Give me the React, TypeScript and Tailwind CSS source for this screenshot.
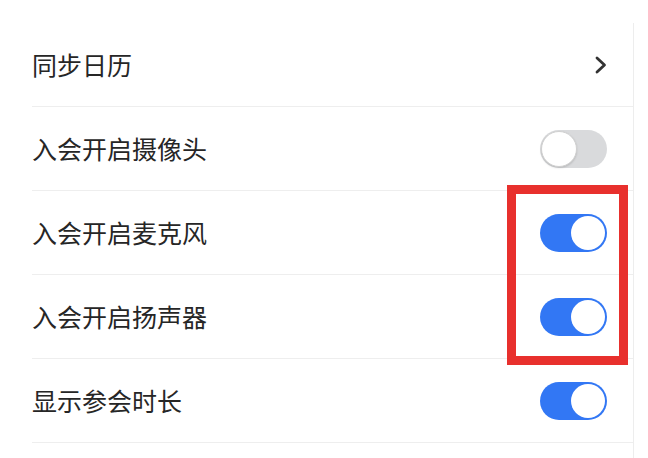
import React from "react";

function Toggle({ on }: { on: boolean }) {
  if (on) {
    return (
      <div className="flex h-[38px] w-[67px] items-center justify-end rounded-full bg-[#3277f4] pr-[2px]">
        <div className="h-[34px] w-[34px] rounded-full bg-white" />
      </div>
    );
  }
  return (
    <div className="flex h-[38px] w-[67px] items-center justify-start rounded-full bg-[#d9dadc] pl-[1px]">
      <div className="h-[36px] w-[36px] rounded-full border border-[#d0d0d0] bg-white shadow-[0_1px_2px_rgba(0,0,0,0.15)]" />
    </div>
  );
}

function Chevron() {
  return (
    <svg width="14" height="18" viewBox="0 0 14 18" className="mr-[-1px]">
      <path d="M3 2 L10.5 9 L3 16" fill="none" stroke="#333" strokeWidth="2.8" strokeLinecap="round" strokeLinejoin="round" />
    </svg>
  );
}

const rows: { label: string; right: "chevron" | "on" | "off" }[] = [
  { label: "同步日历", right: "chevron" },
  { label: "入会开启摄像头", right: "off" },
  { label: "入会开启麦克风", right: "on" },
  { label: "入会开启扬声器", right: "on" },
  { label: "显示参会时长", right: "on" },
];

export default function App() {
  return (
    <div
      className="h-[458px] w-[648px] overflow-hidden bg-white pt-[23px]"
      style={{ fontFamily: '"Noto Sans CJK SC", "Noto Sans", sans-serif' }}
    >
      <div className="relative h-[435px] w-[634px] border-r border-[#ededed] pl-[32px]">
        {rows.map((r) => (
          <div
            key={r.label}
            className="flex h-[84px] items-center justify-between border-b border-[#eeeeee] pr-[26px]"
          >
            <span className="text-[25px] leading-none text-[#262626]">{r.label}</span>
            {r.right === "chevron" ? <Chevron /> : <Toggle on={r.right === "on"} />}
          </div>
        ))}
        <div className="absolute left-[507px] top-[162px] h-[180px] w-[121px] border-[9px] border-[#e8302d]" />
      </div>
    </div>
  );
}
